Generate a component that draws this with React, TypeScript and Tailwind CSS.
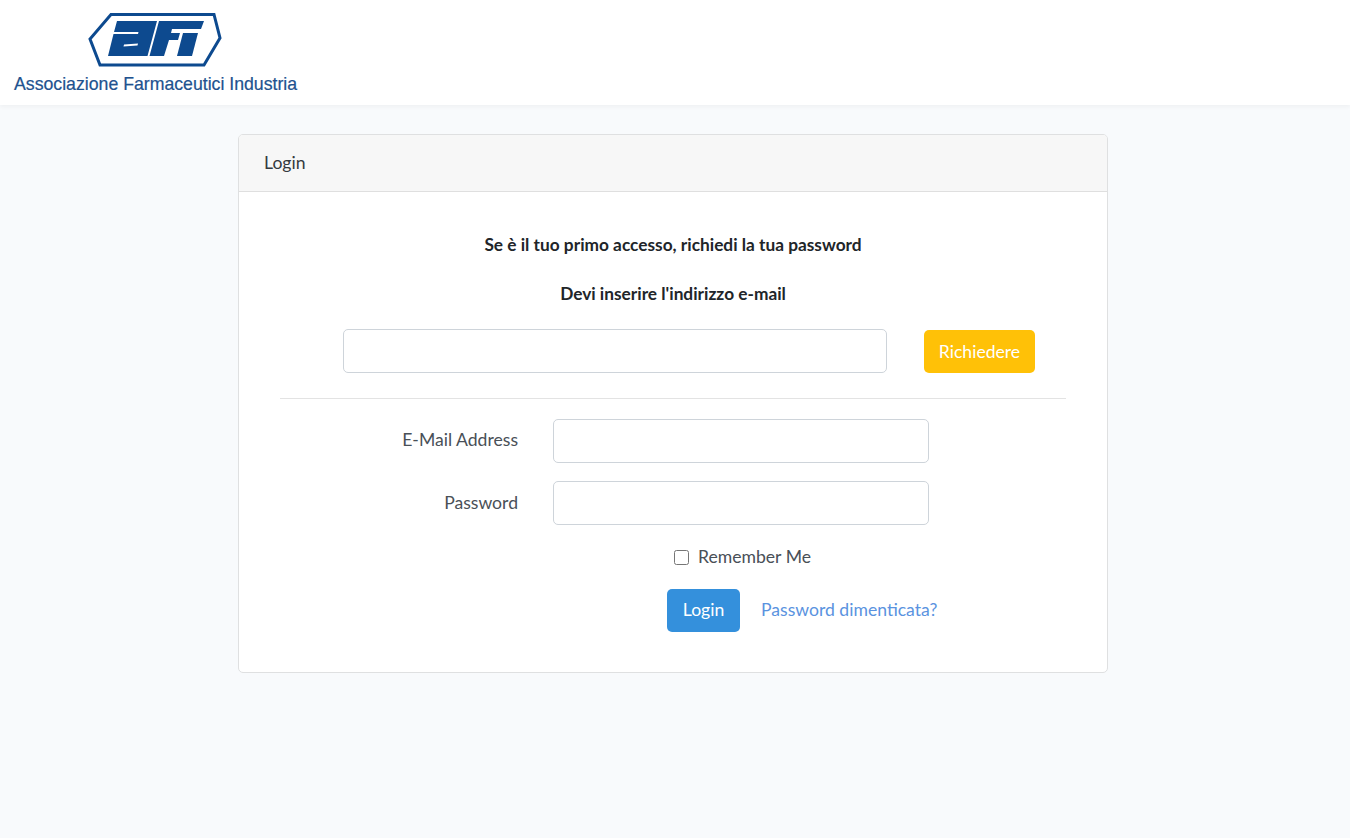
import React from "react";

const Logo = () => (
  <div className="w-[300px] h-[105px] pl-[14px] pt-[12px]">
    <svg width="140" height="56" viewBox="0 0 140 56" className="ml-[74px] block" role="img" aria-label="AFI">
      <polygon points="23,2.5 126,2.5 132,26 116,53 12,53 2,27" fill="none" stroke="#0d4a8f" strokeWidth="3" />
      {/* a */}
      <path
        fillRule="evenodd"
        d="M29 9 H69 L59.5 44 H20 L25.5 22 H50 L50.5 20 H26 Z M36 32.5 L50 31.5 L49.5 33.5 L35.5 34.5 Z"
        fill="#0d4a8f"
      />
      {/* f */}
      <path d="M71 9 H116 L113 17 H84 L83 21 H92 L90 28 H81 L76 44 H61.5 Z" fill="#0d4a8f" />
      {/* i */}
      <path d="M95 21 H110 L104 44 H89 Z" fill="#0d4a8f" />
    </svg>
    <div className="mt-[6px] text-[17.7px] leading-[20px] text-[#21528f] whitespace-nowrap [-webkit-text-stroke:0.2px_#21528f] font-['Liberation_Sans',sans-serif]">
      Associazione Farmaceutici Industria
    </div>
  </div>
);

const inputClass =
  "block h-[44px] rounded-[5px] border border-[#ced4da] bg-white px-3";

const App = () => {
  return (
    <div className="min-h-[838px] bg-[#f8fafc] text-[17.6px] text-[#212529] font-['Lato','Noto_Sans',sans-serif]">
      <div className="h-[105px] bg-white shadow-[0_2px_4px_rgba(0,0,0,0.04)]">
        <Logo />
      </div>
      <div className="pt-[29px] flex justify-center">
        <div className="ml-[-4px] w-[870px] h-[539px] rounded-[5px] border border-[#dfe0e1] bg-white overflow-hidden">
          <div className="h-[57px] flex items-center px-[25px] bg-[#f7f7f7] border-b border-[#dfdfdf] text-[#343a40]">
            Login
          </div>
          <div className="px-[41px] pt-[43px]">
            <p className="text-center text-[17.3px] font-bold leading-[20px] text-[#212529]">
              Se è il tuo primo accesso, richiedi la tua password
            </p>
            <p className="mt-[29px] text-center text-[17.3px] font-bold leading-[20px] text-[#212529]">
              Devi inserire l'indirizzo e-mail
            </p>
            <div className="mt-[25px] flex items-center pl-[63px]">
              <input className={inputClass + " w-[544px]"} />
              <button className="ml-[37px] mt-[1px] pt-[1px] w-[111px] h-[43px] rounded-[5px] bg-[#ffc107] text-white">
                Richiedere
              </button>
            </div>
            <div className="mt-[25px] w-[786px] border-t border-[#e3e3e3]" />
            <div className="mt-[20px] flex items-center">
              <label className="w-[238px] pb-[2px] text-right text-[#495057]">E-Mail Address</label>
              <input className={inputClass + " ml-[35px] w-[376px]"} />
            </div>
            <div className="mt-[18px] flex items-center">
              <label className="w-[238px] text-right text-[#495057]">Password</label>
              <input type="password" className={inputClass + " ml-[35px] w-[376px]"} />
            </div>
            <div className="mt-[21px] flex items-center pl-[394px] h-[22px]">
              <input type="checkbox" className="m-0 w-[15px] h-[15px]" />
              <label className="ml-[9px] text-[#495057]">Remember Me</label>
            </div>
            <div className="mt-[21px] flex items-center pl-[387px]">
              <button className="w-[73px] h-[43px] rounded-[5px] bg-[#3490dc] text-white">Login</button>
              <a className="ml-[21px] text-[#5a93e0]">Password dimenticata?</a>
            </div>
          </div>
        </div>
      </div>
    </div>
  );
};

export default App;
